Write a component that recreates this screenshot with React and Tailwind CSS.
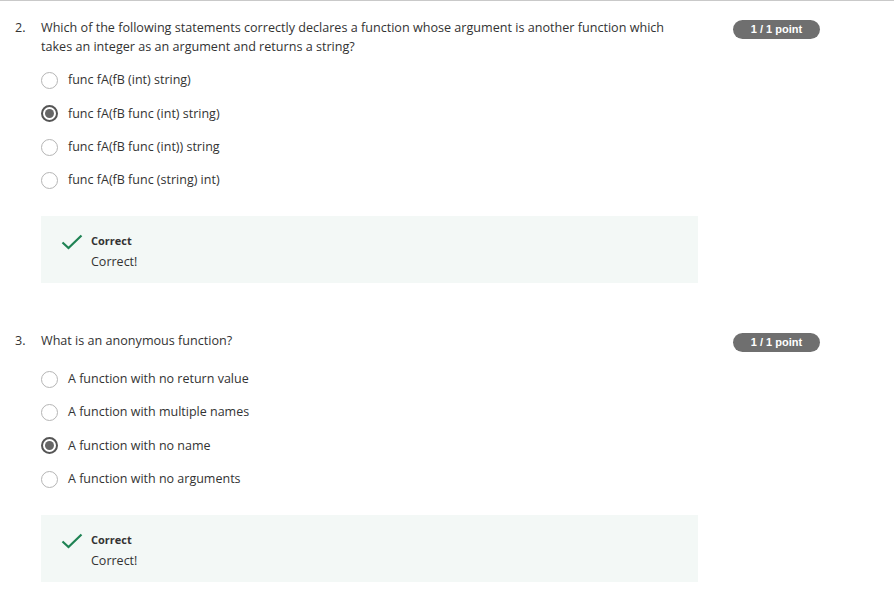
import React from "react";

const questions = [
  {
    num: "2.",
    text: "Which of the following statements correctly declares a function whose argument is another function which takes an integer as an argument and returns a string?",
    options: [
      "func fA(fB (int) string)",
      "func fA(fB func (int) string)",
      "func fA(fB func (int)) string",
      "func fA(fB func (string) int)",
    ],
    picked: 1,
    gap: "mt-[8px]",
    top: "pt-[18px]",
  },
  {
    num: "3.",
    text: "What is an anonymous function?",
    options: [
      "A function with no return value",
      "A function with multiple names",
      "A function with no name",
      "A function with no arguments",
    ],
    picked: 2,
    gap: "mt-[12px]",
    top: "pt-[49px]",
  },
];

function Radio({ checked }) {
  if (checked) {
    return (
      <span className="flex justify-center items-center border-2 border-[#555] rounded-full w-[17px] h-[17px] shrink-0">
        <span className="bg-[#666] rounded-full w-[9px] h-[9px]" />
      </span>
    );
  }
  return (
    <span className="border-[1.5px] border-[#b5b5b5] rounded-full w-[17px] h-[17px] shrink-0" />
  );
}

function Question({ q }) {
  return (
    <div className={`flex ${q.top}`}>
      <div className="pl-[15px] w-[41px] text-[12.6px] leading-[18px] shrink-0">
        {q.num}
      </div>
      <div className="w-[657px] shrink-0">
        <p className="text-[12.6px] leading-[18.5px]">{q.text}</p>
        <div className={`flex flex-col ${q.gap}`}>
          {q.options.map((opt, i) => (
            <div key={opt} className="flex items-center gap-[10px] h-[33.3px]">
              <Radio checked={i === q.picked} />
              <span className="text-[12.5px]">{opt}</span>
            </div>
          ))}
        </div>
        <div className="flex bg-[#f3f8f6] mt-[19px] pt-[17px] pl-[20px] h-[67px]">
          <svg width="22" height="16" viewBox="0 0 22 16" className="mt-[1px] mr-[8px]">
            <path d="M1.5 8.5 L7.5 14 L20.5 1.5" fill="none" stroke="#1f8354" strokeWidth="2.2" />
          </svg>
          <div>
            <div className="font-bold text-[11px] leading-[16px]">Correct</div>
            <div className="mt-[4px] text-[12.5px] leading-[18px]">Correct!</div>
          </div>
        </div>
      </div>
      <div className="pt-[1px] pl-[35px]">
        <span className="flex justify-center items-center bg-[#6f6f6f] rounded-full w-[87px] h-[19px] font-['Liberation_Sans'] font-bold text-[11px] text-white">
          1 / 1 point
        </span>
      </div>
    </div>
  );
}

export default function App() {
  return (
    <div className="bg-white border-[#c9c9c9] border-t w-[894px] h-[595px] font-['Open_Sans'] text-[#333] overflow-hidden">
      {questions.map((q) => (
        <Question key={q.num} q={q} />
      ))}
    </div>
  );
}
